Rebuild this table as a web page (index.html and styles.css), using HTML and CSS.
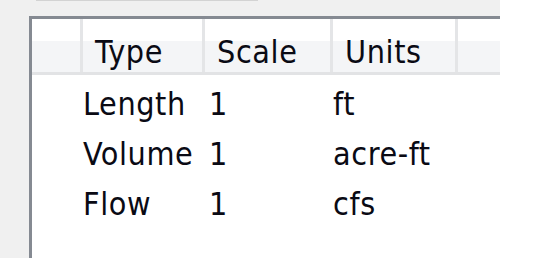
FILE: index.html
```html
<!DOCTYPE html>
<html>
<head>
<meta charset="utf-8">
<link rel="stylesheet" href="styles.css">
</head>
<body>
<div class="panel">
  <div class="topline"></div>
  <div class="listview">
    <div class="header">
      <div class="hcell"></div>
      <div class="hcell">Type</div>
      <div class="hcell">Scale</div>
      <div class="hcell">Units</div>
      <div class="hcell last"></div>
    </div>
    <div class="rows">
      <div class="row"><span class="c0"></span><span class="c">Length</span><span class="c num">1</span><span class="c">ft</span></div>
      <div class="row"><span class="c0"></span><span class="c">Volume</span><span class="c num">1</span><span class="c">acre-ft</span></div>
      <div class="row"><span class="c0"></span><span class="c">Flow</span><span class="c num">1</span><span class="c">cfs</span></div>
    </div>
  </div>
</div>
</body>
</html>
```
FILE: styles.css
```css
html, body {
  margin: 0;
  padding: 0;
  background: #ffffff;
}
body {
  font-family: "DejaVu Sans Condensed", "DejaVu Sans", sans-serif;
  font-stretch: condensed;
  font-size: 32px;
  letter-spacing: 0.6px;
  color: #0a0a14;
}
.panel {
  width: 500px;
  height: 258px;
  background: #f0f0f0;
  display: flex;
  flex-direction: column;
  overflow: hidden;
}
.topline {
  margin-left: 36px;
  width: 222px;
  height: 1px;
  background: #d3d3d3;
  flex: none;
}
.listview {
  margin-top: 15px;
  margin-left: 29px;
  flex: 1;
  background: #fff;
  border-top: 3px solid #858a92;
  border-left: 3px solid #858a92;
  overflow: hidden;
}
.header {
  display: grid;
  grid-template-columns: 51px 122px 128px 125px 1fr;
  height: 53px;
  border-bottom: 3px solid #e2e3e5;
  background: linear-gradient(to bottom, #ffffff 0, #ffffff 22px, #f4f5f7 22px, #f4f5f7 100%);
}
.hcell {
  border-right: 3px solid #e4e5e7;
  padding-left: 12px;
  padding-top: 15px;
  line-height: 36px;
  white-space: nowrap;
}
.hcell.last {
  border-right: none;
}
.rows {
  padding-top: 4px;
}
.row {
  display: grid;
  grid-template-columns: 51px 122px 128px 125px;
  height: 50px;
  line-height: 50px;
  white-space: nowrap;
}
.c {
  padding-left: 0px;
}
.num {
  padding-left: 4px;
}
```
